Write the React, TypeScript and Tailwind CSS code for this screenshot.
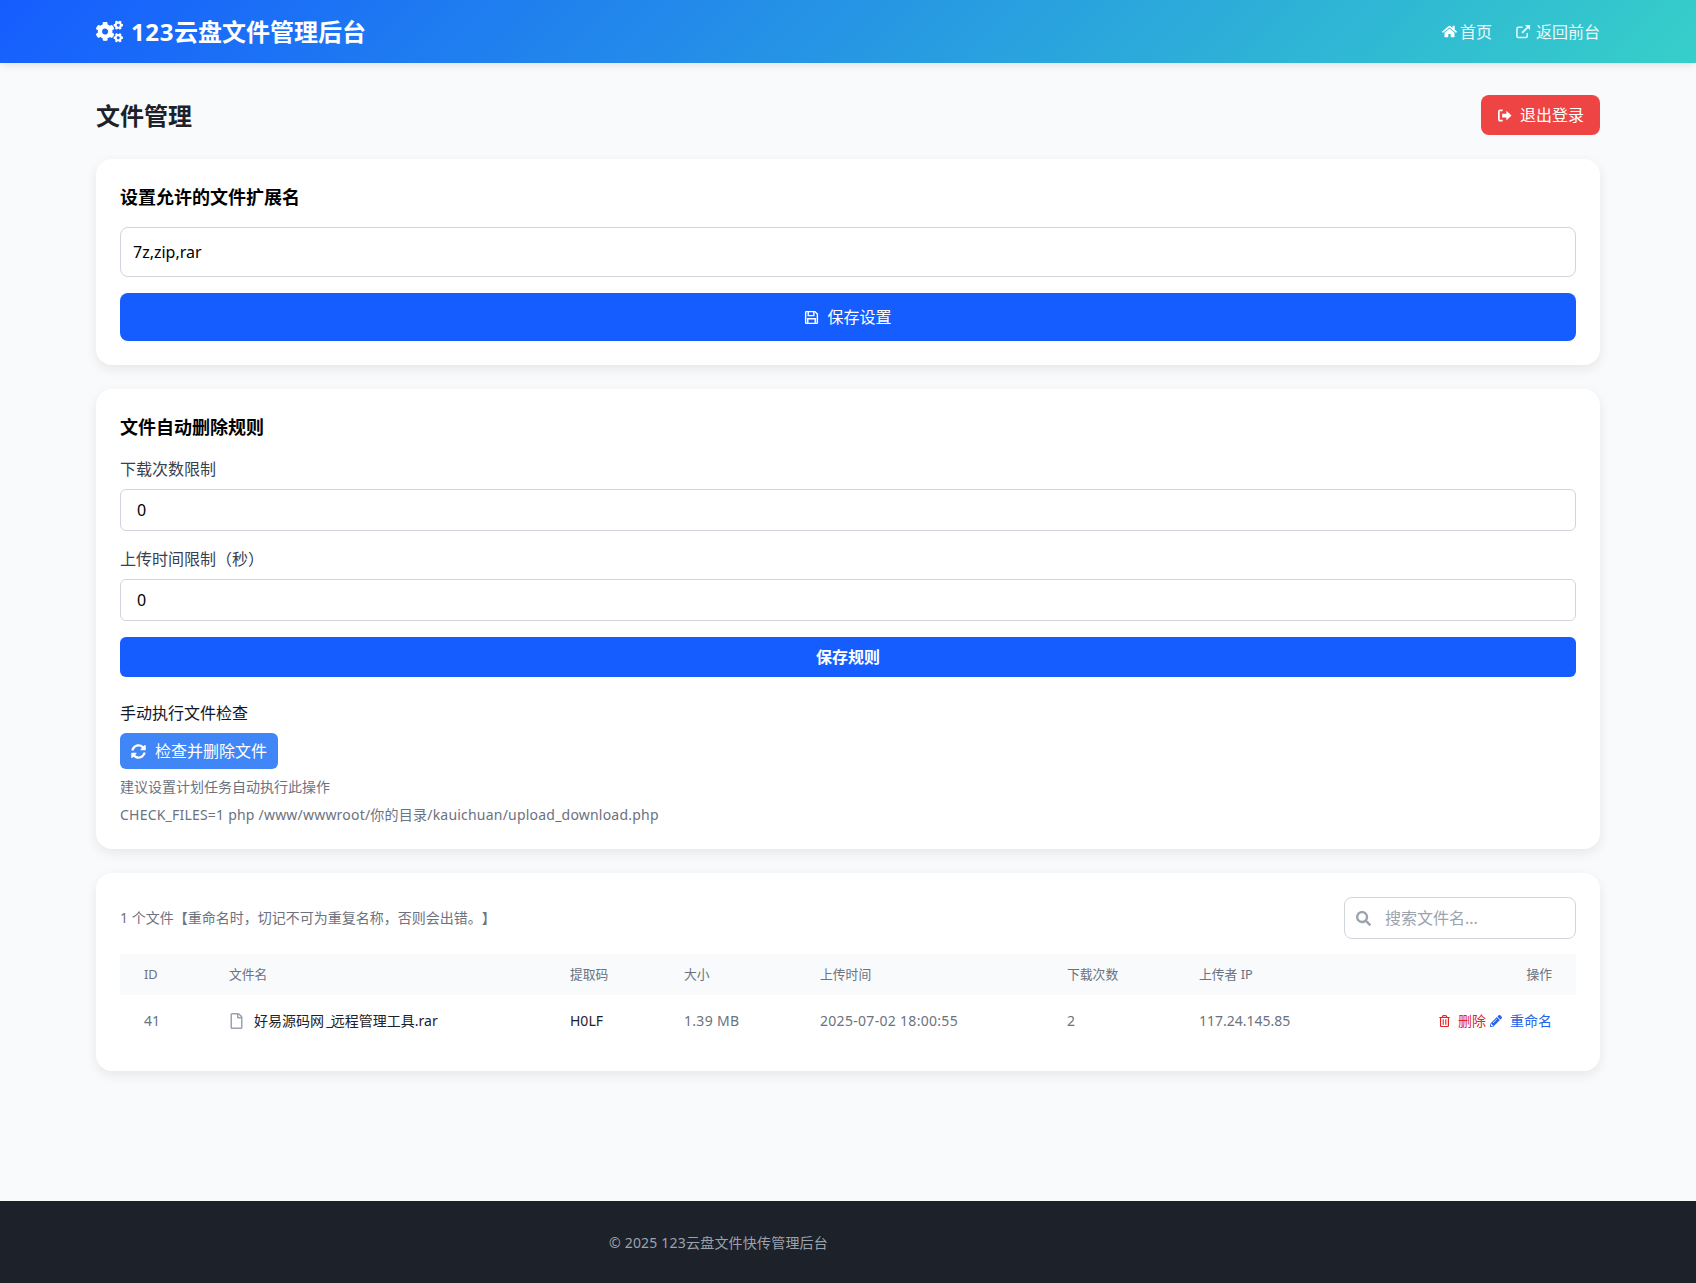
import { FaCogs, FaHome, FaSyncAlt, FaSearch, FaRegFile, FaPencilAlt, FaRegTrashAlt } from "react-icons/fa";

const FONT = "font-['Noto_Sans','Noto_Sans_CJK_SC',sans-serif]";

function ExternalIcon() {
  return (
    <svg viewBox="0 0 16 16" className="w-[15px] h-[15px]" fill="none" stroke="currentColor">
      <path d="M12 9.5V13a1.5 1.5 0 0 1-1.5 1.5H2.500A1.500 1.500 0 0 1 1 13V5a1.500 1.500 0 0 1 1.500-1.500H7" strokeWidth="1.6" />
      <path d="M6.500 9.500 14 2" strokeWidth="2" />
      <path d="M9.500 1h5.500v5.500z" fill="currentColor" stroke="none" />
    </svg>
  );
}

function SignOutIcon() {
  return (
    <svg viewBox="0 0 16 16" className="w-[15px] h-[15px]" fill="currentColor">
      <path d="M6 2.500H3.200A1.200 1.200 0 0 0 2 3.700v8.600a1.200 1.200 0 0 0 1.200 1.200H6" fill="none" stroke="currentColor" strokeWidth="1.800" />
      <path d="M5.500 6h4.500V2.800L15.500 8 10 13.200V10H5.500z" />
    </svg>
  );
}

function SaveIcon() {
  return (
    <svg viewBox="0 0 16 16" className="w-[15px] h-[15px]" fill="none" stroke="currentColor" strokeWidth="1.500">
      <path d="M1.750 2.400a.7.7 0 0 1 .7-.7h9.300l2.500 2.500v9.400a.7.7 0 0 1-.7.7H2.450a.7.7 0 0 1-.7-.7z" />
      <path d="M4.500 1.700v4.300h6V1.700" />
      <path d="M4 14.300V9.300h8v5" />
    </svg>
  );
}

const cols = [
  { label: "ID", w: "w-[85px]" },
  { label: "文件名", w: "w-[341px]" },
  { label: "提取码", w: "w-[114px]" },
  { label: "大小", w: "w-[136px]" },
  { label: "上传时间", w: "w-[247px]" },
  { label: "下载次数", w: "w-[132px]" },
  { label: "上传者 IP", w: "w-[130px]" },
];

export default function App() {
  return (
    <div className={`${FONT} min-h-[1283px] flex flex-col bg-[#f9fafc] text-[#1d2129] text-base`}>
      <header className="h-[63px] shrink-0 bg-[linear-gradient(135deg,#165dff,#36cfc9)] shadow-[0_2px_8px_rgba(0,0,0,0.1)] relative">
        <div className="h-full mx-[96px] flex items-center justify-between text-white">
          <div className="flex items-center gap-[8px] text-2xl font-bold">
            <FaCogs className="w-[27px] h-[23px]" />
            <span><span className="tracking-[0.6px]">123</span>云盘文件管理后台</span>
          </div>
          <nav className="flex items-center gap-[24px] text-white/90">
            <a className="flex items-center gap-[3px]">
              <FaHome className="w-[15px] h-[15px] text-white" />
              <span>首页</span>
            </a>
            <a className="flex items-center gap-[5px]">
              <ExternalIcon />
              <span>返回前台</span>
            </a>
          </nav>
        </div>
      </header>

      <main className="flex-1 mx-[96px] pt-[32px]">
        <div className="flex items-center justify-between h-[40px] mb-[24px]">
          <h1 className="text-2xl font-bold pt-[2px]">文件管理</h1>
          <button className="h-[40px] w-[119px] rounded-lg bg-[#ef4444] text-white flex items-center justify-center gap-[8px]">
            <SignOutIcon />
            <span>退出登录</span>
          </button>
        </div>

        <section className="bg-white rounded-2xl shadow-[0_4px_12px_rgba(0,0,0,0.08)] p-[24px] mb-[24px]">
          <h2 className="text-lg font-bold text-black leading-[28px] mb-[16px]">设置允许的文件扩展名</h2>
          <div className="h-[50px] rounded-lg border border-[#d1d5db] px-[12px] flex items-center text-black">7z,zip,rar</div>
          <button className="mt-[16px] w-full h-[48px] rounded-lg bg-[#165dff] text-white flex items-center justify-center gap-[8px]">
            <SaveIcon />
            <span>保存设置</span>
          </button>
        </section>

        <section className="bg-white rounded-2xl shadow-[0_4px_12px_rgba(0,0,0,0.08)] p-[24px] mb-[24px]">
          <h2 className="text-lg font-bold text-black leading-[28px] mb-[16px]">文件自动删除规则</h2>
          <label className="block leading-[24px] mb-[8px] text-[#374151]">下载次数限制</label>
          <div className="h-[42px] rounded-md border border-[#d1d5db] px-[16px] flex items-center text-black">0</div>
          <label className="block leading-[24px] mt-[16px] mb-[8px] text-[#374151]">上传时间限制（秒）</label>
          <div className="h-[42px] rounded-md border border-[#d1d5db] px-[16px] flex items-center text-black">0</div>
          <button className="mt-[16px] w-full h-[40px] rounded-md bg-[#165dff] text-white font-bold">保存规则</button>
          <div className="mt-[24px] leading-[24px] text-[#111827]">手动执行文件检查</div>
          <button className="mt-[8px] w-[158px] h-[36px] rounded-md bg-[#4086f7] text-white flex items-center justify-center gap-[9px]">
            <FaSyncAlt className="w-[15px] h-[15px]" />
            <span>检查并删除文件</span>
          </button>
          <p className="mt-[8px] text-sm leading-[20px] text-[#6b7280]">建议设置计划任务自动执行此操作</p>
          <p className="mt-[8px] text-sm leading-[20px] text-[#6b7280] tracking-[0.21px]">CHECK_FILES=1 php /www/wwwroot/你的目录/kauichuan/upload_download.php</p>
        </section>

        <section className="bg-white rounded-2xl shadow-[0_4px_12px_rgba(0,0,0,0.08)] p-[24px]">
          <div className="flex items-center justify-between mb-[15px]">
            <span className="text-sm text-[#6b7280] [text-spacing-trim:space-all]">1 个文件【重命名时，切记不可为重复名称，否则会出错。】</span>
            <div className="w-[232px] h-[42px] rounded-lg border border-[#d1d5db] flex items-center pl-[11px] gap-[14px] text-[#9ca3af]">
              <FaSearch className="w-[15px] h-[15px]" />
              <span>搜索文件名...</span>
            </div>
          </div>
          <table className="w-full table-fixed border-collapse">
            <thead>
              <tr className="bg-[#f9fafb] h-[41px]">
                {cols.map((c) => (
                  <th key={c.label} className={`${c.w} px-[24px] text-left text-[12.800px] font-normal text-[#6b7280]`}>{c.label}</th>
                ))}
                <th className="px-[24px] text-right text-[12.800px] font-normal text-[#6b7280]">操作</th>
              </tr>
            </thead>
            <tbody>
              <tr className="h-[52px] text-sm text-[#6b7280]">
                <td className="px-[24px]">41</td>
                <td className="px-[24px] text-[#1d2129]">
                  <div className="flex items-center gap-[10px] whitespace-nowrap">
                    <FaRegFile className="w-[15px] h-[16px] text-[#9ca3af]" />
                    <span>好易源码网<span className="tracking-[-1.500px]"> _</span>远程管理工具.rar</span>
                  </div>
                </td>
                <td className="px-[24px] text-[#1d2129]">H0LF</td>
                <td className="px-[24px] tracking-[0.3px]">1.39 MB</td>
                <td className="px-[24px] tracking-[0.3px]">2025-07-02 18:00:55</td>
                <td className="px-[24px]">2</td>
                <td className="px-[24px] whitespace-nowrap">117.24.145.85</td>
                <td className="px-[24px]">
                  <div className="flex items-center justify-end whitespace-nowrap">
                    <FaRegTrashAlt className="w-[11px] h-[12px] text-[#dc2626] mr-[8px]" />
                    <span className="text-[#dc2626] mr-[4px]">删除</span>
                    <FaPencilAlt className="w-[12px] h-[12px] text-[#2563eb] mr-[8px]" />
                    <span className="text-[#2563eb]">重命名</span>
                  </div>
                </td>
              </tr>
            </tbody>
          </table>
        </section>
      </main>

      <footer className="h-[82px] shrink-0 bg-[#1d2129] flex items-center pl-[609px] pt-[2px] text-sm text-[#9ca3af] tracking-[0.2px]">
        © 2025 123云盘文件快传管理后台
      </footer>
    </div>
  );
}
